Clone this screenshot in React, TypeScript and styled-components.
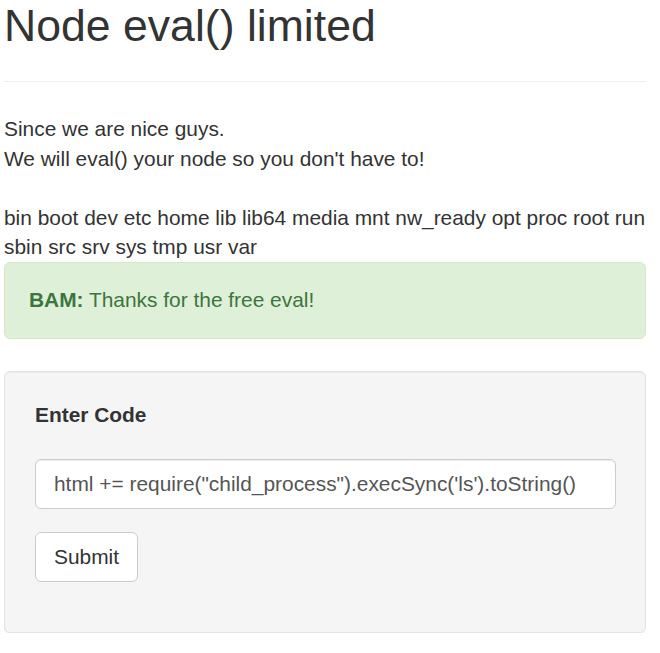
import React from 'react';
import styled, { createGlobalStyle } from 'styled-components';

const GlobalStyle = createGlobalStyle`
  body {
    margin: 0;
    background: #fff;
    color: #333;
    font-family: "Liberation Sans", Arial, sans-serif;
    font-size: 20.9px;
    line-height: 29.5px;
  }
`;

// Page column
const Container = styled.div`
  box-sizing: border-box;
  width: 656px;
  padding: 2px 10px 0 4px;
`;

// Title with the grey rule under it
const PageHeader = styled.div`
  border-bottom: 1px solid #eee;
  padding-bottom: 31px;
`;

const Title = styled.h2`
  margin: 0;
  font-size: 44.6px;
  line-height: 48px;
  font-weight: 500;
`;

const Output = styled.p`
  margin: 32px 0 0;
`;

const Alert = styled.div`
  box-sizing: border-box;
  margin: 0 0 32px;
  padding: 22.5px 24px 23px;
  border: 1px solid #d6e9c6;
  border-radius: 6px;
  background: #dff0d8;
  color: #3c763d;
`;

const Well = styled.div`
  box-sizing: border-box;
  padding: 28px 29px 29px 30px;
  border: 1px solid #e3e3e3;
  border-radius: 6px;
  background: #f5f5f5;
  box-shadow: inset 0 1px 1px rgba(0, 0, 0, 0.05), 0 1px 1px rgba(0, 0, 0, 0.06);
`;

const Form = styled.form`
  display: flex;
  flex-direction: column;
  align-items: flex-start;
`;

const Label = styled.label`
  font-weight: 700;
  margin-bottom: 30px;
`;

const CodeInput = styled.input`
  box-sizing: border-box;
  width: 100%;
  height: 50px;
  padding: 0 18px;
  margin-bottom: 23px;
  border: 1px solid #ccc;
  border-radius: 6px;
  background: #fff;
  color: #555;
  font: inherit;
  box-shadow: inset 0 1px 1px rgba(0, 0, 0, 0.075);
  outline: none;
`;

const Button = styled.button`
  box-sizing: border-box;
  height: 50px;
  padding: 0 18px;
  margin-bottom: 21px;
  border: 1px solid #ccc;
  border-radius: 6px;
  background: #fff;
  color: #333;
  font: inherit;
`;

const App = (): JSX.Element => (
  <Container>
    <GlobalStyle />
    <PageHeader>
      <Title>Node eval() limited</Title>
    </PageHeader>

    <Output>
      Since we are nice guys.
      <br />
      We will eval() your node so you don&apos;t have to!
      <br />
      <br />
      bin boot dev etc home lib lib64 media mnt nw_ready opt proc root run sbin src srv sys tmp usr var
    </Output>

    <Alert>
      <strong>BAM:</strong> Thanks for the free eval!
    </Alert>

    <Well>
      <Form onSubmit={(e) => { e.preventDefault(); }}>
        <Label htmlFor="code">Enter Code</Label>
        <CodeInput
          id="code"
          defaultValue={'html += require("child_process").execSync(\'ls\').toString()'}
        />
        <Button type="submit">Submit</Button>
      </Form>
    </Well>
  </Container>
);

export default App;
